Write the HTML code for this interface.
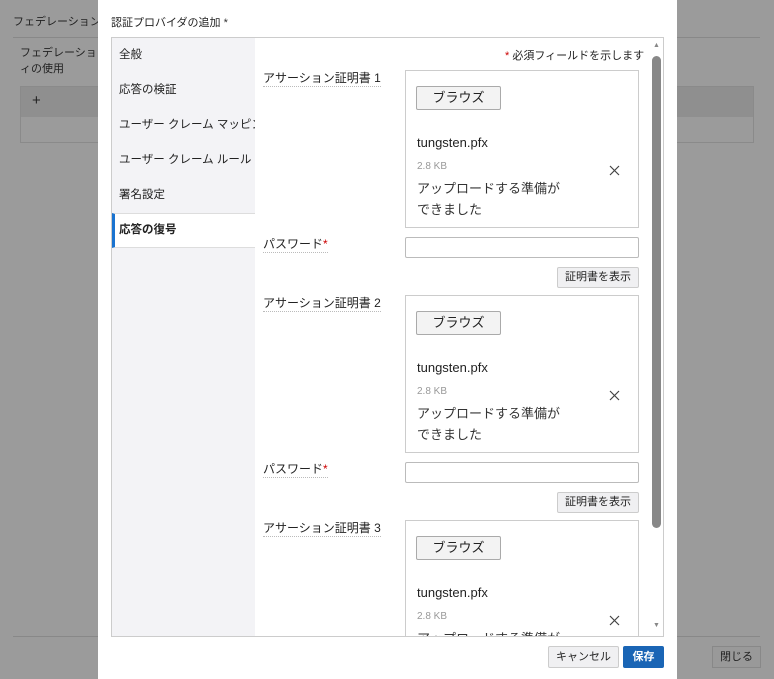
<!DOCTYPE html>
<html><head><meta charset="utf-8"><style>
*{box-sizing:border-box;margin:0;padding:0}
body{width:774px;height:679px;overflow:hidden;background:#9b9b9b;font-family:"Liberation Sans","Noto Sans CJK JP",sans-serif;color:#333;position:relative;font-size:12px}
.a{position:absolute}
.lbl{position:absolute;left:263px;font-size:12px;color:#222;border-bottom:1px dotted #bbb;line-height:15px}
.box{position:absolute;left:405px;width:234px;height:158px;border:1px solid #ccc;background:#fff}
.br{position:absolute;left:10px;top:15px;width:85px;height:24px;border:1px solid #aaa;border-radius:2px;background:#f3f3f3;font-size:13px;text-align:center;line-height:22px;color:#222}
.fn{position:absolute;left:11px;top:64px;font-size:13px;color:#222}
.kb{position:absolute;left:11px;top:90px;font-size:10px;color:#999}
.x{position:absolute;left:203px;top:94px}
.st{position:absolute;left:11px;top:107px;font-size:13px;line-height:21px;color:#333}
.inp{position:absolute;left:405px;width:234px;height:21px;border:1px solid #bbb;border-radius:2px;background:#fff}
.sb{position:absolute;left:557px;width:82px;height:21px;border:1px solid #ccc;border-radius:2px;background:#f0f0f2;font-size:11px;text-align:center;line-height:19px;color:#222}
.nav div{height:35px;line-height:35px;padding-left:7px;font-size:11.5px;color:#222;white-space:nowrap;overflow:hidden}
</style></head><body>
<div class="a" style="left:13px;top:13px;font-size:11px;color:#222">フェデレーション</div>
<div class="a" style="left:13px;top:37px;width:747px;height:1px;background:#888"></div>
<div class="a" style="left:20px;top:45px;font-size:11px;color:#222;line-height:16px">フェデレーション<br>ィの使用</div>
<div class="a" style="left:20px;top:86px;width:734px;height:57px;border:1px solid #8a8a8a"></div>
<div class="a" style="left:21px;top:87px;width:732px;height:30px;background:#8f8f8f"></div>
<div class="a" style="left:32px;top:92px;font-size:15px;color:#222">+</div>
<div class="a" style="left:13px;top:636px;width:747px;height:1px;background:#888"></div>
<div class="a" style="left:712px;top:646px;width:49px;height:22px;border:1px solid #888;background:#999;font-size:11px;text-align:center;line-height:20px;color:#222">閉じる</div>

<div class="a" style="left:98px;top:0;width:579px;height:679px;background:#fff"></div>
<div class="a" style="left:111px;top:14px;font-size:11px;color:#222">認証プロバイダの追加 <span style="color:#333">*</span></div>
<div class="a" style="left:111px;top:37px;width:553px;height:600px;border:1px solid #ccc;overflow:hidden">
 <div class="a nav" style="left:0;top:0;width:143px;height:600px;background:#f3f3f6">
  <div>全般</div><div>応答の検証</div><div>ユーザー クレーム マッピン</div><div>ユーザー クレーム ルール</div><div>署名設定</div>
  <div style="background:#fff;border-left:3px solid #1a73d0;border-top:1px solid #ddd;border-bottom:1px solid #ddd;font-weight:bold;padding-left:4px;height:35px;line-height:33px">応答の復号</div>
 </div>
 <div class="a" style="left:538px;top:0;width:14px;height:600px;background:#fff"></div>
 <div class="a" style="left:540px;top:18px;width:9px;height:472px;border-radius:5px;background:#888"></div>
 <div class="a" style="left:541px;top:4px;font-size:7px;color:#888">▲</div>
 <div class="a" style="left:541px;top:584px;font-size:7px;color:#888">▼</div>
</div>
<div class="a" style="left:505px;top:47px;font-size:11px;color:#222"><span style="color:#c00">*</span> 必須フィールドを示します</div>

<div class="lbl" style="top:71px">アサーション証明書 1</div>
<div class="box" style="top:70px"><div class="br">ブラウズ</div><div class="fn">tungsten.pfx</div><div class="kb">2.8 KB</div><svg class="x" width="11" height="11"><path d="M1 1L10 10M10 1L1 10" stroke="#444" stroke-width="1.2"/></svg><div class="st">アップロードする準備が<br>できました</div></div>
<div class="lbl" style="top:237px">パスワード<span style="color:#c00">*</span></div>
<div class="inp" style="top:237px"></div>
<div class="sb" style="top:267px">証明書を表示</div>

<div class="lbl" style="top:296px">アサーション証明書 2</div>
<div class="box" style="top:295px"><div class="br">ブラウズ</div><div class="fn">tungsten.pfx</div><div class="kb">2.8 KB</div><svg class="x" width="11" height="11"><path d="M1 1L10 10M10 1L1 10" stroke="#444" stroke-width="1.2"/></svg><div class="st">アップロードする準備が<br>できました</div></div>
<div class="lbl" style="top:462px">パスワード<span style="color:#c00">*</span></div>
<div class="inp" style="top:462px"></div>
<div class="sb" style="top:492px">証明書を表示</div>

<div class="lbl" style="top:521px">アサーション証明書 3</div>
<div class="box" style="top:520px;height:116px;overflow:hidden;border-bottom:none"><div class="br">ブラウズ</div><div class="fn">tungsten.pfx</div><div class="kb">2.8 KB</div><svg class="x" width="11" height="11"><path d="M1 1L10 10M10 1L1 10" stroke="#444" stroke-width="1.2"/></svg><div class="st">アップロードする準備が<br>できました</div></div>
<div class="a" style="left:111px;top:636px;width:553px;height:1px;background:#ccc"></div>

<div class="a" style="left:548px;top:646px;width:71px;height:22px;border:1px solid #ccc;border-radius:2px;background:#f0f0f2;font-size:11px;text-align:center;line-height:20px;color:#222">キャンセル</div>
<div class="a" style="left:623px;top:646px;width:41px;height:22px;border-radius:2px;background:#1a65b5;font-size:11px;text-align:center;line-height:22px;color:#fff;font-weight:bold">保存</div>
</body></html>
